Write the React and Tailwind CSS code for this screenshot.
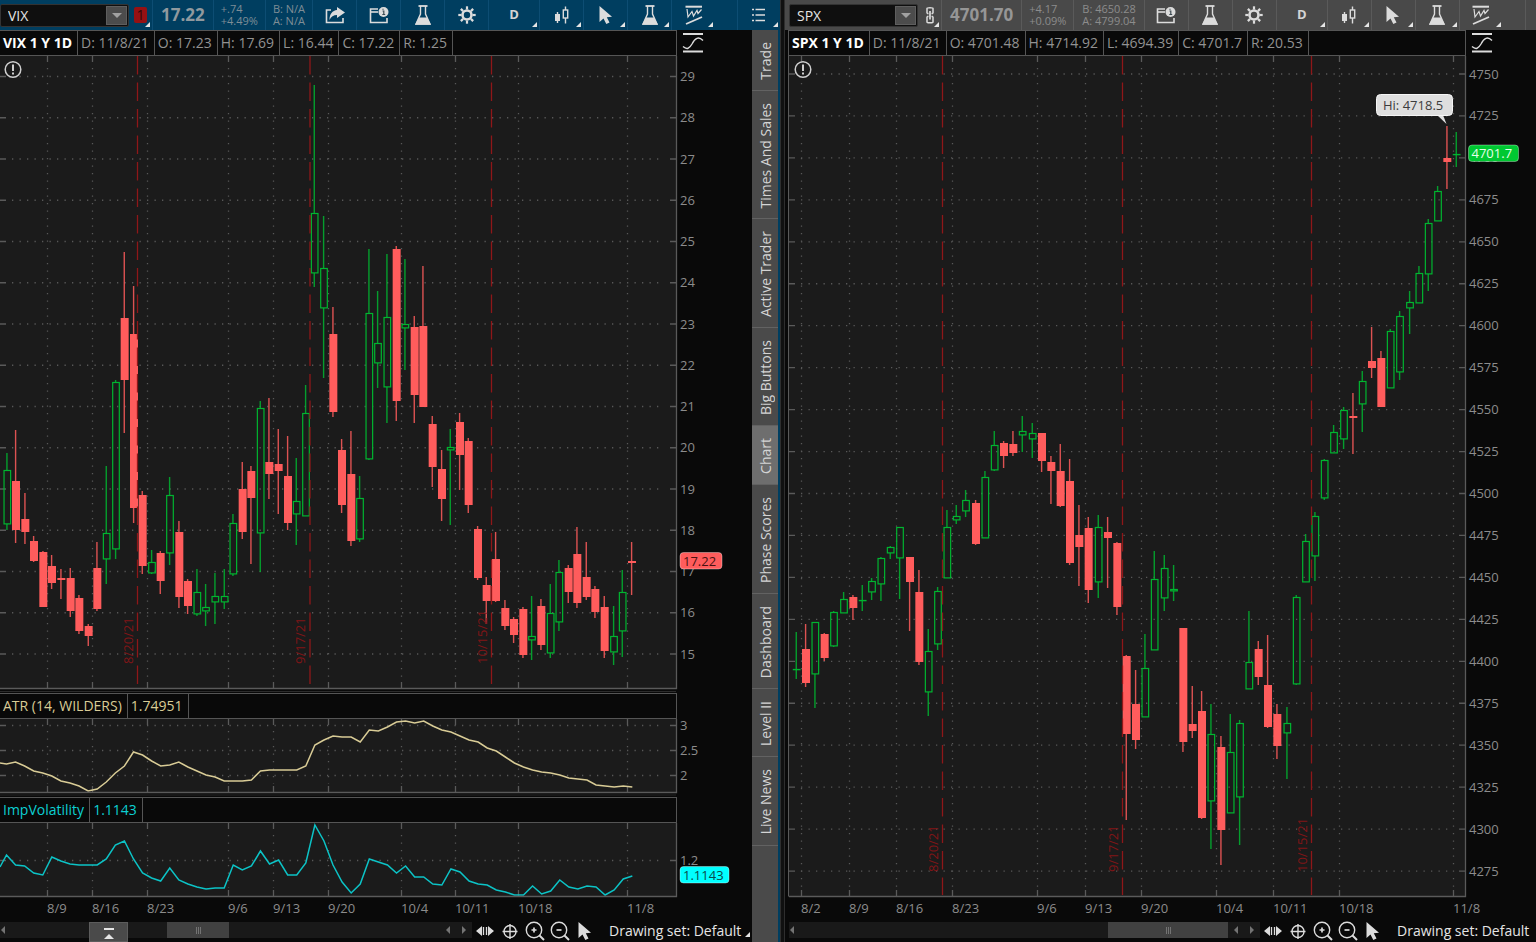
const UP = '#00b530'
const DOWN = '#ff5c5c'

// high, body top, body bottom, low, 1 = up day
const vixCandles = [
  [453, 470, 524, 530, 1], [430, 481, 530, 543, 0], [493, 519, 532, 544, 0], [536, 541, 561, 562, 0],
  [551, 552, 607, 607, 0], [555, 566, 583, 589, 0], [569, 578, 580, 599, 0], [568, 578, 611, 617, 0],
  [595, 598, 631, 634, 0], [624, 626, 636, 646, 0], [542, 568, 609, 611, 0], [466, 533, 559, 584, 1],
  [380, 382, 549, 559, 1], [252, 318, 380, 433, 0], [286, 334, 508, 523, 0], [491, 495, 566, 574, 0],
  [550, 562, 573, 574, 1], [551, 553, 581, 594, 0], [477, 495, 553, 565, 1], [521, 532, 597, 608, 0],
  [579, 581, 606, 614, 0], [569, 592, 614, 616, 1], [584, 607, 611, 626, 1], [573, 596, 602, 624, 1],
  [569, 596, 602, 609, 1], [514, 523, 574, 576, 1], [462, 489, 532, 539, 0], [466, 471, 498, 564, 0],
  [401, 408, 533, 572, 1], [398, 462, 474, 499, 0], [429, 464, 471, 514, 0], [436, 476, 523, 530, 0],
  [458, 501, 514, 545, 1], [385, 413, 516, 516, 1], [85, 213, 273, 287, 1], [216, 268, 308, 378, 1],
  [307, 334, 412, 417, 0], [439, 450, 505, 513, 0], [431, 474, 541, 546, 0], [476, 498, 539, 542, 1],
  [249, 313, 459, 460, 1], [291, 343, 363, 388, 1], [254, 317, 387, 423, 1], [246, 249, 401, 421, 0],
  [259, 324, 328, 370, 1], [316, 327, 395, 423, 0], [266, 326, 407, 407, 0], [416, 424, 467, 487, 0],
  [450, 469, 499, 521, 0], [429, 447, 450, 525, 1], [413, 422, 455, 490, 0], [438, 441, 505, 513, 0],
  [526, 529, 578, 580, 0], [577, 585, 601, 624, 0], [532, 559, 601, 602, 0], [600, 608, 626, 630, 0],
  [617, 619, 635, 643, 0], [607, 609, 655, 658, 0], [596, 636, 640, 660, 1], [599, 606, 645, 650, 0],
  [584, 613, 653, 658, 1], [560, 572, 622, 631, 1], [565, 568, 592, 603, 0], [527, 554, 603, 608, 0],
  [542, 577, 597, 600, 0], [586, 589, 612, 618, 0], [596, 607, 651, 658, 0], [606, 636, 652, 665, 1],
  [570, 592, 631, 657, 1], [542, 561, 563, 595, 0],
]

const spxCandles = [
  [632, 669, 670, 679, 1], [624, 649, 683, 687, 0], [622, 622, 674, 708, 1], [633, 634, 658, 661, 0],
  [611, 612, 646, 647, 1], [592, 599, 613, 613, 1], [595, 597, 608, 620, 0], [585, 600, 601, 611, 1],
  [578, 581, 592, 600, 1], [557, 558, 584, 601, 1], [546, 547, 553, 559, 1], [527, 527, 558, 599, 1],
  [557, 557, 582, 631, 0], [570, 592, 662, 665, 0], [629, 651, 692, 716, 1], [587, 591, 644, 650, 1],
  [510, 527, 578, 578, 1], [505, 516, 520, 524, 1], [490, 500, 511, 517, 1], [500, 503, 544, 545, 0],
  [471, 477, 538, 538, 1], [431, 445, 470, 471, 1], [441, 443, 456, 468, 0], [431, 444, 453, 456, 0],
  [416, 431, 435, 452, 1], [423, 433, 439, 458, 1], [433, 433, 461, 472, 0], [456, 462, 471, 504, 0],
  [444, 471, 506, 507, 0], [459, 481, 563, 565, 0], [505, 535, 547, 586, 0], [517, 528, 590, 603, 0],
  [515, 527, 582, 598, 1], [517, 532, 538, 588, 0], [542, 543, 607, 615, 0], [655, 656, 734, 820, 0],
  [670, 704, 740, 749, 0], [634, 668, 717, 717, 1], [551, 579, 650, 650, 1], [555, 568, 598, 611, 1],
  [565, 589, 591, 601, 1], [628, 628, 742, 752, 0], [686, 724, 731, 738, 0], [691, 711, 818, 819, 0],
  [704, 734, 801, 849, 1], [736, 747, 830, 865, 0], [714, 752, 813, 813, 1], [720, 723, 797, 845, 1],
  [611, 662, 689, 689, 1], [641, 649, 677, 685, 0], [635, 685, 727, 728, 0], [704, 714, 746, 759, 0],
  [707, 723, 733, 779, 1], [595, 597, 684, 685, 1], [534, 541, 582, 582, 1], [512, 516, 556, 581, 1],
  [459, 460, 498, 500, 1], [425, 432, 453, 453, 1], [407, 410, 439, 449, 1], [393, 416, 418, 454, 0],
  [371, 381, 404, 432, 1], [327, 361, 368, 378, 0], [351, 358, 407, 407, 0], [329, 331, 388, 388, 1],
  [311, 316, 372, 380, 1], [291, 302, 308, 334, 1], [266, 273, 303, 303, 1], [219, 223, 274, 291, 1],
  [186, 191, 221, 221, 1], [126, 158, 162, 189, 0], [132, 154, 155, 167, 1],
]

const atr = [
  764, 762, 766, 771, 773, 776, 781, 783, 786, 791, 789, 782, 773, 766, 752, 755, 761, 766, 765, 762,
  767, 771, 775, 777, 781, 781, 781, 780, 771, 770, 770, 770, 770, 766, 745, 740, 736, 737, 737, 742,
  730, 731, 727, 722, 721, 723, 721, 726, 730, 732, 736, 740, 742, 748, 751, 757, 763, 767, 770, 772,
  773, 775, 778, 779, 780, 785, 786, 787, 786, 787,
]

const impVol = [
  855, 865, 866, 873, 875, 857, 861, 864, 865, 865, 865, 859, 845, 841, 859, 873, 878, 881, 868, 880,
  884, 887, 889, 888, 888, 865, 870, 866, 851, 864, 860, 875, 875, 863, 825, 841, 865, 882, 893, 884,
  859, 862, 865, 873, 866, 877, 877, 884, 885, 869, 872, 881, 884, 885, 890, 892, 895, 895, 886, 894,
  891, 880, 887, 889, 886, 887, 895, 890, 879, 876,
]

const vixDates = [
  [47.5, '8/9'], [92.5, '8/16'], [147.5, '8/23'], [228.5, '9/6'], [273.5, '9/13'],
  [328.5, '9/20'], [401.5, '10/4'], [455.5, '10/11'], [518.5, '10/18'], [627.5, '11/8'],
]
const spxDates = [
  [801.5, '8/2'], [849.5, '8/9'], [896.5, '8/16'], [952.5, '8/23'], [1037.5, '9/6'], [1085.5, '9/13'],
  [1141.5, '9/20'], [1216.5, '10/4'], [1273.5, '10/11'], [1339.5, '10/18'], [1453.5, '11/8'],
]

const vixLevels = Array.from({ length: 15 }, (_, i) => [76.5 + i * 41.25, String(29 - i)])
const spxLevels = Array.from({ length: 20 }, (_, i) => [74 + i * 41.95, String(4750 - i * 25)])
const atrLevels = [[725.5, '3'], [750.5, '2.5'], [775.5, '2']]
const impLevels = [[860.5, '1.2']]

const vixExpiries = [[137.5, '8/20/21'], [310, '9/17/21'], [491.5, '10/15/21']]
const spxExpiries = [[942.5, '8/20/21'], [1122.5, '9/17/21'], [1311.5, '10/15/21']]

const tabs = [
  'Trade', 'Times And Sales', 'Active Trader', 'Big Buttons', 'Chart',
  'Phase Scores', 'Dashboard', 'Level II', 'Live News',
]

/* ---------- charts ---------- */

function Plot({ left, right, top, bottom, dates, levels, children }) {
  return (
    <>
      <rect x={left} y={top} width={right - left} height={bottom - top} fill="#1b1b1b" />
      <g stroke="#585858" strokeWidth="1.3" strokeDasharray="1.3 6.2">
        {levels.map(([y]) => (
          <line key={y} x1={left + 12} x2={right - 14} y1={y} y2={y} />
        ))}
        {dates.map(([x]) => (
          <line key={x} x1={x} x2={x} y1={top + 12} y2={bottom - 8} />
        ))}
      </g>
      <g stroke="#5a5a5a" strokeWidth="1.3">
        {levels.map(([y]) => (
          <path key={y} d={`M${left} ${y}h6M${right} ${y}h-6`} />
        ))}
        {dates.map(([x]) => (
          <path key={x} d={`M${x} ${top}v6M${x} ${bottom}v-6`} />
        ))}
      </g>
      {children}
      <path d={`M${left} ${bottom + 0.5}H${right + 0.5}V${top}`} fill="none" stroke="#5a5a5a" strokeWidth="1.3" />
      <g fill="#8c8c8c" fontSize="13">
        {levels.map(([y, label]) => (
          <text key={label} x={right + 4} y={Math.floor(y) + 5}>{label}</text>
        ))}
      </g>
    </>
  )
}

function Expiries({ items, top, bottom, labelY }) {
  return items.map(([x, label]) => (
    <g key={label}>
      <line x1={x} x2={x} y1={top} y2={bottom} stroke="#8e1719" strokeWidth="1.3" strokeDasharray="18.4 8.1" />
      <text transform={`translate(${x - 5} ${labelY}) rotate(-90)`} fontSize="13" fill="#801517">{label}</text>
    </g>
  ))
}

function Candles({ data, start, step }) {
  return data.map(([high, top, bottom, low, up], i) => {
    const x = Math.round((start + i * step) * 1.5) / 1.5
    const color = up ? UP : DOWN
    const thin = bottom - top < 2
    return (
      <g key={i}>
        <path d={`M${x - 0.4} ${high}V${top}M${x - 0.4} ${bottom}V${low}`} stroke={color} strokeWidth="1.4" strokeOpacity="0.85" />
        {up ? (
          <rect x={x - 3.3} y={top + 0.5} width="6.6" height={thin ? 0.2 : bottom - top - 0.6} fill="none" stroke={color} strokeWidth="1.2" />
        ) : (
          <rect x={x - 4} y={top} width="8" height={bottom - top} fill={color} />
        )}
      </g>
    )
  })
}

function Series({ data, from, color }) {
  const points = data.map((y, i) => `${6.5 + i * 9.07},${y}`).join(' ')
  return <polyline points={`0,${from} ${points}`} fill="none" stroke={color} strokeWidth="1.5" />
}

function DateLabels({ dates }) {
  return (
    <g fill="#8c8c8c" fontSize="13">
      {dates.map(([x, label]) => (
        <text key={label} x={x - 0.5} y="913">{label}</text>
      ))}
    </g>
  )
}

function Alert({ x, y }) {
  return (
    <g>
      <circle cx={x} cy={y} r="7.8" fill="#1b1b1b" stroke="#cfcfcf" strokeWidth="1.5" />
      <path d={`M${x} ${y - 5}v6.5M${x} ${y + 3}v2`} stroke="#cfcfcf" strokeWidth="2" />
    </g>
  )
}

function Tag({ x, y, width, fill, color, children }) {
  return (
    <g>
      <rect x={x} y={y} width={width} height="16.5" rx="3.5" fill={fill} stroke="#ffffff" strokeOpacity="0.35" />
      <text x={x + 3} y={y + 13} fontSize="13" fill={color}>{children}</text>
    </g>
  )
}

function VixChart() {
  return (
    <svg viewBox="0 56 752 637" preserveAspectRatio="xMinYMin meet" className="block min-h-0 w-full flex-1">
      <Plot left={0} right={676} top={56} bottom={688} dates={vixDates} levels={vixLevels}>
        <Candles data={vixCandles} start={7} step={9.056} />
        <Expiries items={vixExpiries} top={56} bottom={684} labelY={664} />
        <Alert x={13} y={69.5} />
      </Plot>
      <path d="M0 691.5H676" stroke="#2c2c2c" />
      <Tag x={680} y={552.5} width={42} fill={DOWN} color="#4a1212">17.22</Tag>
    </svg>
  )
}

function AtrChart() {
  return (
    <svg viewBox="0 719 752 78" preserveAspectRatio="xMinYMin meet" className="block h-[78px] w-full shrink-0 overflow-visible">
      <Plot left={0} right={676} top={719} bottom={792} dates={vixDates} levels={atrLevels}>
        <Series data={atr} from={763} color="#d9cc96" />
      </Plot>
      <path d="M0 795H676" stroke="#242424" />
    </svg>
  )
}

function ImpVolChart() {
  return (
    <svg viewBox="0 823 752 99" preserveAspectRatio="xMinYMin meet" className="block h-[99px] w-full shrink-0">
      <Plot left={0} right={676} top={823} bottom={896} dates={vixDates} levels={impLevels}>
        <Series data={impVol} from={867} color="#0cc3c6" />
      </Plot>
      <Tag x={680} y={866.5} width={49} fill="#00ffff" color="#0b4a4a">1.1143</Tag>
      <DateLabels dates={vixDates} />
    </svg>
  )
}

function SpxChart() {
  return (
    <svg viewBox="785 56 751 866" preserveAspectRatio="xMinYMin meet" className="block min-h-0 w-full flex-1">
      <Plot left={789} right={1465} top={56} bottom={896} dates={spxDates} levels={spxLevels}>
        <Candles data={spxCandles} start={796.5} step={9.434} />
        <Expiries items={spxExpiries} top={56} bottom={895} labelY={872} />
        <Alert x={803} y={69.5} />
      </Plot>
      <path d="M788.5 56V896.5" stroke="#5a5a5a" />
      <path d="M1437 115L1446.5 124L1443 115Z" fill="#e0e0e0" />
      <rect x="1376.5" y="94.5" width="76" height="21" rx="4" fill="#dedede" stroke="#f5f5f5" />
      <text x="1383" y="110" fontSize="13" fill="#3c3c3c">Hi: 4718.5</text>
      <Tag x={1468.5} y={145} width={50} fill="#00c832" color="#e6ffe9">4701.7</Tag>
      <DateLabels dates={spxDates} />
    </svg>
  )
}

/* ---------- icons ---------- */

function Icon({ children, className = 'size-[22px]' }) {
  return (
    <svg viewBox="0 0 22 22" className={className} fill="none" stroke="#dcdcdc" strokeWidth="1.4" aria-hidden="true">
      {children}
    </svg>
  )
}

const ShareIcon = () => (
  <Icon>
    <path d="M7 6H2.500V18.500H19V14" strokeWidth="1.600" />
    <path d="M13 3L21 8.500L13 14V11C9.500 11 7 12.500 5.500 16C5.500 10 8.500 6.500 13 6Z" fill="#dcdcdc" stroke="none" />
  </Icon>
)

const WindowIcon = () => (
  <Icon>
    <path d="M10 5H2.500V18.500H19V14" strokeWidth="1.600" />
    <path d="M3 8H10" strokeWidth="1.600" />
    <circle cx="15.500" cy="8" r="5" fill="#dcdcdc" stroke="none" />
    <path d="M14.500 7H15.800V10.500M14.300 10.500H17.200M15 4.800V5.800" stroke="#3c4a52" strokeWidth="1.200" />
  </Icon>
)

const FlaskIcon = () => (
  <Icon>
    <path d="M6.500 2H15.500" strokeWidth="1.800" />
    <path d="M8.500 2V10L4 20H18L13.500 10V2" />
    <path d="M7 13.500H15L19 20.700H3Z" fill="#dcdcdc" stroke="none" />
  </Icon>
)

const GearIcon = () => (
  <Icon>
    <circle cx="11" cy="11" r="4.500" strokeWidth="2.600" />
    {[0, 45, 90, 135, 180, 225, 270, 315].map((a) => (
      <path key={a} d="M11 5.500V2.300" strokeWidth="2.200" transform={`rotate(${a} 11 11)`} />
    ))}
  </Icon>
)

const CandleIcon = () => (
  <Icon>
    <path d="M6.500 8V19" />
    <rect x="4" y="10" width="5" height="7" fill="#dcdcdc" stroke="none" />
    <path d="M14.500 2.500V6M14.500 14V19.500" />
    <rect x="12.300" y="6" width="4.400" height="8" />
  </Icon>
)

const CursorIcon = () => (
  <Icon>
    <path d="M4.500 2V18L8.500 14.500L11.300 20L14.500 18.500L11.800 13.200L17 12.800Z" fill="#dcdcdc" stroke="none" />
  </Icon>
)

const PatternIcon = () => (
  <Icon>
    <path d="M2.500 2.700H19" strokeWidth="2" />
    <path d="M4 5L5 13L9 7.500L10.500 12L14 6.500L15 9.500L18.500 5.500" strokeWidth="1.200" />
    <path d="M3 20L19 13" strokeWidth="1.900" />
  </Icon>
)

const ListIcon = () => (
  <Icon>
    <path d="M4 5.500H6M4 11H6M4 16.500H6M7.500 5.500H17M7.500 11H17M7.500 16.500H17" strokeWidth="1.500" />
  </Icon>
)

const LinkIcon = () => (
  <Icon>
    <path d="M8 9.500V4.500C8 3.500 14 3.500 14 4.500V9.500M8 12.500V18C8 19 14 19 14 18V12.500M8 9.500H9.500M14 9.500H12.500M8 12.500H9.500M14 12.500H12.500" strokeWidth="1.500" />
    <path d="M11 7V15.500" strokeWidth="1.700" />
  </Icon>
)

const CurveIcon = () => (
  <Icon>
    <path d="M1 2H21M1 19.500H21" strokeWidth="2" />
    <path d="M1 14.500C5 18 7.500 16.500 10 12C13 6 16.500 4 21 8.500" />
  </Icon>
)

const PanIcon = () => (
  <Icon>
    <path d="M8 6V16L2 11ZM14 6V16L20 11Z" fill="#dcdcdc" stroke="none" />
    <path d="M9.500 7V15M12.500 7V15" strokeWidth="1.300" />
  </Icon>
)

const CrosshairIcon = () => (
  <Icon>
    <circle cx="11" cy="11.500" r="6" />
    <path d="M11 4V19M3.500 11.500H18.500" />
  </Icon>
)

const ZoomIcon = ({ plus }) => (
  <Icon>
    <circle cx="10" cy="10" r="7.700" />
    <path d="M15.500 15.500L20 20" strokeWidth="2" />
    <path d={plus ? 'M7.500 10H12.500M10 7.500V12.500' : 'M7.500 10H12.500'} strokeWidth="1.700" />
  </Icon>
)

/* ---------- toolbar ---------- */

function Corner() {
  return <span className="absolute right-0.5 bottom-[3px] size-0 border-b-5 border-l-5 border-b-neutral-200 border-l-transparent" />
}

function Tool({ label, menu, line, className = 'w-11', children }) {
  return (
    <button type="button" aria-label={label} className={`relative flex h-full shrink-0 items-center justify-center border-l ${line} ${className}`}>
      {children}
      {menu && <Corner />}
    </button>
  )
}

function Toolbar({ symbol, price, change, percent, bid, ask, active }) {
  const line = active ? 'border-[#0d4d73]' : 'border-[#5a5a5a]'
  const muted = active ? 'text-[#7e8d96]' : 'text-[#8c8c8c]'
  return (
    <div className={`flex h-[30px] shrink-0 items-center ${active ? 'bg-[#003e60]' : 'bg-[#494949] pl-1'}`}>
      <div className="flex h-[23px] w-[129px] shrink-0 rounded-xs border border-[#333] bg-[#0f0f0f] p-px">
        <input
          aria-label={`${symbol} symbol`}
          defaultValue={symbol}
          className="w-0 flex-1 bg-transparent pl-1.5 text-[14px] text-neutral-200 outline-none"
        />
        <button type="button" aria-label="Symbol list" className="flex w-[21px] items-center justify-center border border-[#5e5e5e] bg-[#4c4c4c]">
          <span className="border-x-5 border-t-5 border-x-transparent border-t-neutral-400" />
        </button>
      </div>
      <button type="button" aria-label="Link group" className="relative flex h-full w-[23px] shrink-0 items-center justify-center">
        {active ? (
          <span className="mb-px h-4 w-[13px] rounded-xs bg-[#961113] text-center text-[14px] leading-4 text-[#2e0809]">1</span>
        ) : (
          <LinkIcon />
        )}
        <Corner />
      </button>
      <div className={`flex h-full items-center border-l px-2 text-[17px] font-bold ${line} ${active ? 'text-[#90999e]' : 'text-[#969696]'}`}>{price}</div>
      <div className={`flex h-full flex-col justify-center border-l px-[7px] text-[11px] leading-[12px] ${line} ${muted}`}>
        <span>{change}</span>
        <span>{percent}</span>
      </div>
      <div className={`flex h-full flex-col justify-center border-l text-[11px] leading-[12px] whitespace-nowrap ${active ? 'px-[7px]' : 'px-2'} ${line} ${muted}`}>
        <span>B: {bid}</span>
        <span>A: {ask}</span>
      </div>
      {active && <Tool label="Share" line={line}><ShareIcon /></Tool>}
      <Tool label="Chart details" line={line}><WindowIcon /></Tool>
      <Tool label="Edit studies" line={line}><FlaskIcon /></Tool>
      <Tool label="Settings" line={line}><GearIcon /></Tool>
      <Tool label="Aggregation" line={line} menu className="w-[51px]">
        <span className="text-[13px] font-bold text-neutral-300">D</span>
      </Tool>
      <Tool label="Style" line={line} menu><CandleIcon /></Tool>
      <Tool label="Drawings" line={line} menu><CursorIcon /></Tool>
      <Tool label="Studies" line={line} menu><FlaskIcon /></Tool>
      <Tool label="Patterns" line={line} menu><PatternIcon /></Tool>
      <div className="flex-1" />
      {active ? (
        <Tool label="Menu" line={line} menu className="w-[43px]"><ListIcon /></Tool>
      ) : (
        <div className={`h-full w-[11px] border-l ${line}`} />
      )}
    </div>
  )
}

function InfoBar({ items, color, curve, axis, bold }) {
  return (
    <div className="flex h-[26px] shrink-0">
      <div className="flex min-w-0 flex-1 border-y border-r border-[#555]">
        {items.map((item, i) => (
          <span
            key={item}
            className={`flex items-center border-r border-[#555] pr-[5px] pb-0.5 pl-[3px] text-[14px] whitespace-nowrap ${i === 0 && bold ? 'font-bold text-white' : color}`}
          >
            {item}
          </span>
        ))}
      </div>
      <div className={`flex shrink-0 items-center pl-[5px] ${axis}`}>
        {curve && <button type="button" aria-label="Scale"><CurveIcon /></button>}
      </div>
    </div>
  )
}

function Grip() {
  return (
    <span className="flex gap-px">
      <i className="h-[7px] w-px bg-neutral-500" />
      <i className="h-[7px] w-px bg-neutral-500" />
      <i className="h-[7px] w-px bg-neutral-500" />
    </span>
  )
}

function Arrow({ right }) {
  return (
    <button
      type="button"
      aria-label={right ? 'Scroll right' : 'Scroll left'}
      className={`border-y-4 border-y-transparent ${right ? 'border-l-4 border-l-neutral-500' : 'border-r-4 border-r-neutral-500'}`}
    />
  )
}

function BottomBar({ active }) {
  return (
    <div className={`flex h-5 shrink-0 ${active ? '' : 'pl-1'}`}>
      <div className="flex h-4 min-w-0 flex-1 items-center bg-[#191919]">
        <div className={`flex items-center pl-px ${active ? 'w-[89px]' : 'flex-1'}`}><Arrow /></div>
        {active && (
          <>
            <button type="button" aria-label="Show panel" className="flex h-5 w-[39px] flex-col items-center justify-end gap-1 self-start border border-[#5c5c5c] bg-[#4a4a4a] pb-0.5">
              <span className="h-0.5 w-2.5 bg-neutral-200" />
              <span className="border-x-5 border-b-5 border-x-transparent border-b-neutral-200" />
            </button>
            <div className="w-[39px]" />
          </>
        )}
        <div className={`flex h-4 items-center justify-center bg-[#414141] ${active ? 'w-[62px]' : 'w-[120px]'}`}><Grip /></div>
        {active && <div className="flex-1" />}
        <div className="flex items-center gap-3 px-1.5">
          <Arrow />
          <Arrow right />
        </div>
      </div>
      <div className={`relative flex h-[18px] shrink-0 items-center ${active ? 'w-[280px]' : 'w-[276px]'}`}>
        <button type="button" aria-label="Pan" className="flex w-[25px] justify-center"><PanIcon /></button>
        <button type="button" aria-label="Crosshair" className="flex w-[25px] justify-center"><CrosshairIcon /></button>
        <button type="button" aria-label="Zoom in" className="flex w-[25px] justify-center"><ZoomIcon plus /></button>
        <button type="button" aria-label="Zoom out" className="flex w-[25px] justify-center"><ZoomIcon /></button>
        <button type="button" aria-label="Pointer" className="flex w-[25px] justify-center"><CursorIcon /></button>
        <button type="button" className="ml-3 text-[14px] leading-4 whitespace-nowrap text-neutral-200">Drawing set: Default</button>
        {active && <Corner />}
      </div>
    </div>
  )
}

function SideTabs() {
  return (
    <nav className="flex w-[26px] shrink-0 flex-col bg-[#4a4a4a]">
      {tabs.map((tab) => (
        <button
          key={tab}
          type="button"
          className={`flex w-full shrink-0 justify-center border-b border-[#626262] pt-3 pb-2.5 pl-0.5 text-[14px] leading-5 text-neutral-300 ${tab === 'Chart' ? 'bg-[#6e6e6e]' : ''}`}
        >
          <span className="block rotate-180 whitespace-nowrap [writing-mode:vertical-rl]">{tab}</span>
        </button>
      ))}
    </nav>
  )
}

export default function App() {
  return (
    <div className="grid h-screen grid-cols-[780fr_5px_751fr] overflow-hidden bg-[#090909] font-['Open_Sans','Noto_Sans',sans-serif]">
      <section className="flex min-w-0 flex-col">
        <Toolbar symbol="VIX" price="17.22" change="+.74" percent="+4.49%" bid="N/A" ask="N/A" active />
        <div className="flex min-h-0 flex-1 border-r-2 border-[#003e60]">
          <div className="flex min-w-0 flex-1 flex-col">
            <InfoBar
              items={['VIX 1 Y 1D', 'D: 11/8/21', 'O: 17.23', 'H: 17.69', 'L: 16.44', 'C: 17.22', 'R: 1.25']}
              color="text-[#929292]"
              axis="w-[75px]"
              bold
              curve
            />
            <VixChart />
            <InfoBar items={['ATR (14, WILDERS)', '1.74951']} color="text-[#d9cc96]" axis="w-[75px]" />
            <AtrChart />
            <InfoBar items={['ImpVolatility', '1.1143']} color="text-[#0ccfd2]" axis="w-[75px]" />
            <ImpVolChart />
            <BottomBar active />
          </div>
          <SideTabs />
        </div>
      </section>

      <div className="border-x border-[#2e2e2e] bg-[#101010]" />

      <section className="flex min-w-0 flex-col">
        <Toolbar symbol="SPX" price="4701.70" change="+4.17" percent="+0.09%" bid="4650.28" ask="4799.04" />
        <div className="ml-[3px] border-l border-[#555]">
          <InfoBar
            items={['SPX 1 Y 1D', 'D: 11/8/21', 'O: 4701.48', 'H: 4714.92', 'L: 4694.39', 'C: 4701.7', 'R: 20.53']}
            color="text-[#929292]"
            axis="w-[70px]"
            bold
            curve
          />
        </div>
        <SpxChart />
        <BottomBar />
      </section>
    </div>
  )
}
